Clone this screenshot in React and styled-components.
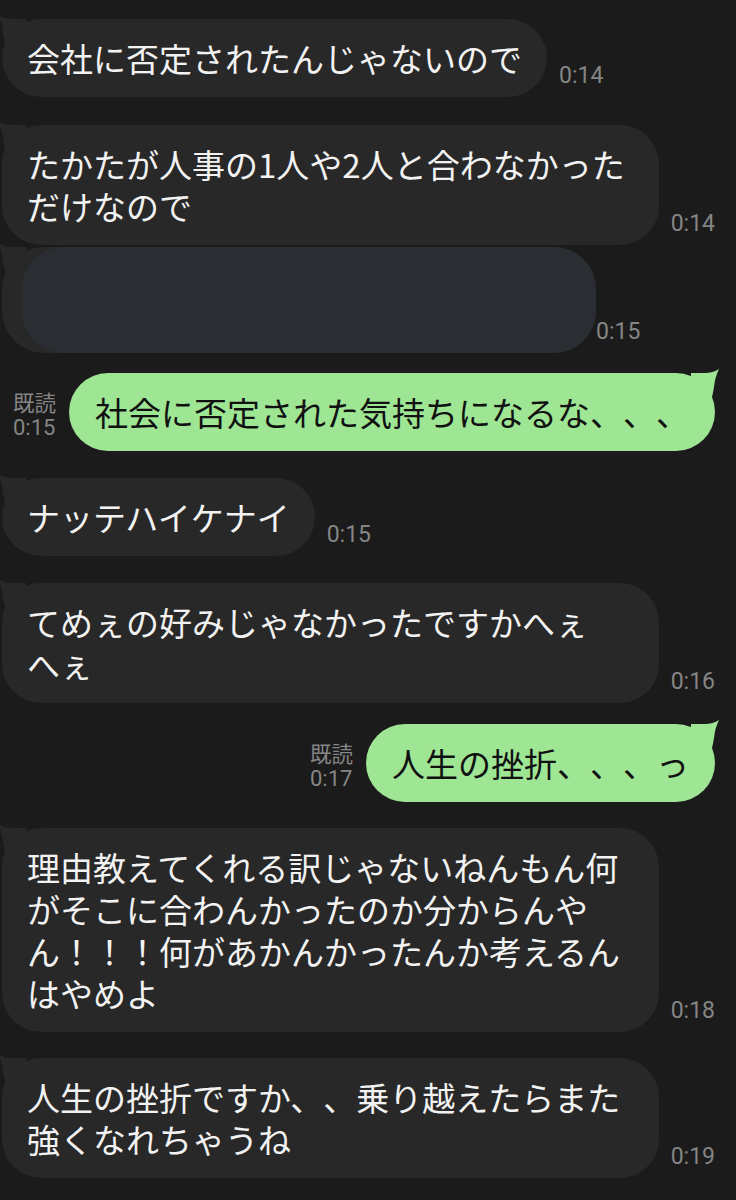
import React from "react";
import styled, { createGlobalStyle } from "styled-components";

const GlobalStyle = createGlobalStyle`
  html, body {
    margin: 0;
    padding: 0;
    background: #1b1b1b;
    overflow: hidden;
  }
  * { box-sizing: border-box; }
`;

const Chat = styled.main`
  width: 736px;
  height: 1200px;
  padding: 19px 21px 0 2px;
  display: flex;
  flex-direction: column;
  background: #1b1b1b;
  font-family: "Noto Sans CJK JP", "Noto Sans", sans-serif;
`;

const Row = styled.div`
  display: flex;
  align-items: flex-end;
  justify-content: ${(p) => (p.$out ? "flex-end" : "flex-start")};
  margin-top: ${(p) => p.$top || 0}px;
`;

const Bubble = styled.div`
  position: relative;
  max-width: 659px;
  padding: 18px ${(p) => (p.$out ? 26 : 25)}px;
  border-radius: 39px;
  background: ${(p) => (p.$out ? "#9ee594" : "#282828")};
  color: ${(p) => (p.$out ? "#111111" : "#f2f2f2")};
  font-family: "Noto Sans CJK JP", "Noto Sans", sans-serif;
  font-size: 33px;
  line-height: 42px;
  line-break: strict;
  word-break: normal;
  text-spacing-trim: space-all;
`;

const Text = styled.span`
  position: relative;
`;

const RedactedBubble = styled(Bubble)`
  width: 594px;
  height: 106px;
  padding: 0;
  border-radius: 42px;
`;

const Redaction = styled.div`
  position: absolute;
  left: 20px;
  top: 0;
  right: 0;
  bottom: 0;
  border-radius: 42px;
  background: #2a2e33;
`;

const TailSvg = styled.svg`
  position: absolute;
  top: -4px;
  width: 28px;
  height: 28px;
  ${(p) =>
    p.$out
      ? "right: -4px;"
      : "left: -4px; transform: scaleX(-1);"}
`;

const Time = styled.span`
  flex: none;
  margin-left: ${(p) => (p.$gap !== undefined ? p.$gap : 12)}px;
  margin-bottom: 8px;
  font-family: Roboto, "Liberation Sans", sans-serif;
  font-size: 23px;
  line-height: 27px;
  color: #858585;
`;

const ReadMark = styled.div`
  flex: none;
  display: flex;
  flex-direction: column;
  margin-right: 13px;
  margin-bottom: 10px;
  font-family: Roboto, "Noto Sans CJK JP", sans-serif;
  font-size: 22px;
  line-height: 26px;
  color: #858585;
`;

const ReadLabel = styled.span`
  font-family: "Noto Sans CJK JP", sans-serif;
  font-size: 21.5px;
`;

function Tail({ out }) {
  return (
    <TailSvg $out={out} viewBox="0 0 28 28" aria-hidden="true">
      <path
        d="M0 4 L14 4 Q22 4 28 0 Q24 8 23 18 Q22 24 21 28 L0 28 Z"
        fill={out ? "#9ee594" : "#282828"}
      />
    </TailSvg>
  );
}

function Incoming({ top, time, children }) {
  return (
    <Row $top={top}>
      <Bubble>
        <Tail />
        <Text>{children}</Text>
      </Bubble>
      <Time>{time}</Time>
    </Row>
  );
}

function Outgoing({ top, time, children }) {
  return (
    <Row $out $top={top}>
      <ReadMark>
        <ReadLabel>既読</ReadLabel>
        <span>{time}</span>
      </ReadMark>
      <Bubble $out>
        <Tail out />
        <Text>{children}</Text>
      </Bubble>
    </Row>
  );
}

export default function App() {
  return (
    <>
      <GlobalStyle />
      <Chat lang="ja">
        <Incoming top={0} time="0:14">
          会社に否定されたんじゃないので
        </Incoming>
        <Incoming top={28} time="0:14">
          たかたが人事の1人や2人と合わなかっただけなので
        </Incoming>
        <Row $top={2}>
          <RedactedBubble>
            <Tail />
            <Redaction />
          </RedactedBubble>
          <Time $gap={0}>0:15</Time>
        </Row>
        <Outgoing top={20} time="0:15">
          社会に否定された気持ちになるな、、、
        </Outgoing>
        <Incoming top={27} time="0:15">
          ナッテハイケナイ
        </Incoming>
        <Incoming top={27} time="0:16">
          {"てめぇの好みじゃなかったですかへ\u2060ぇへ\u2060ぇ"}
        </Incoming>
        <Outgoing top={21} time="0:17">
          人生の挫折、、、っ
        </Outgoing>
        <Incoming top={26} time="0:18">
          理由教えてくれる訳じゃないねんもん何がそこに合わんかったのか分からんやん！！！何があかんかったんか考えるんはやめよ
        </Incoming>
        <Incoming top={26} time="0:19">
          人生の挫折ですか、、乗り越えたらまた強くなれちゃうね
        </Incoming>
      </Chat>
    </>
  );
}
